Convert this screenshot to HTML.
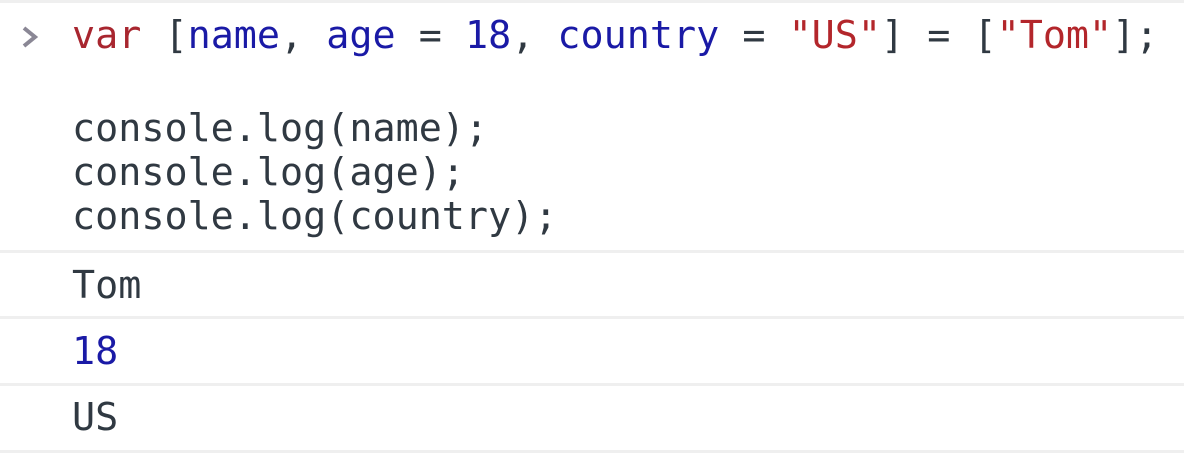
<!DOCTYPE html>
<html><head><style>
body{margin:0;width:1184px;height:456px;background:#fff;overflow:hidden;position:relative;font-family:"DejaVu Sans Mono","Liberation Mono",monospace;font-size:38.4px;color:#303942}
.l{position:absolute;left:72px;white-space:pre;line-height:44px}
.sep{position:absolute;left:0;width:1184px;height:3px;background:#efefef}
.k{color:#a8262f}.v{color:#1a1aa6}.s{color:#b3262b}
.p{position:absolute;left:20px;top:24px}
</style></head><body>
<div class="sep" style="top:0"></div>
<svg class="p" width="20" height="26" viewBox="0 0 20 26"><path d="M4 4 L15 13 L4 22" fill="none" stroke="#8a8795" stroke-width="4"/></svg>
<div class="l" style="top:14px"><span class="k">var</span> [<span class="v">name</span>, <span class="v">age</span> = <span class="v">18</span>, <span class="v">country</span> = <span class="s">"US"</span>] = [<span class="s">"Tom"</span>];</div>
<div class="l" style="top:107px">console.log(name);</div>
<div class="l" style="top:151px">console.log(age);</div>
<div class="l" style="top:195px">console.log(country);</div>
<div class="sep" style="top:250px"></div>
<div class="l" style="top:264px">Tom</div>
<div class="sep" style="top:316px"></div>
<div class="l v" style="top:330px">18</div>
<div class="sep" style="top:383px"></div>
<div class="l" style="top:396px">US</div>
<div class="sep" style="top:450px"></div>
</body></html>
